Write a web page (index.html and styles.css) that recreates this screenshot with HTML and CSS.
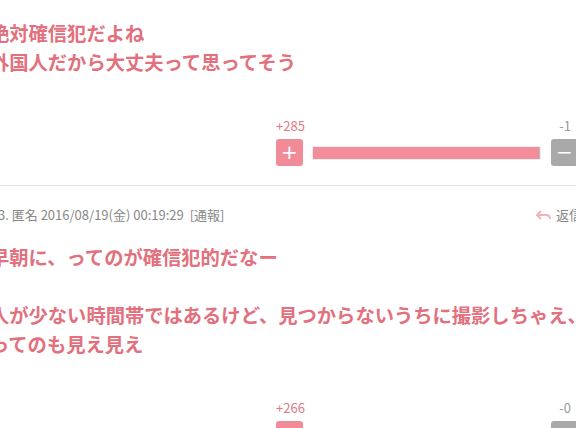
FILE: index.html
```html
<!DOCTYPE html>
<html lang="ja">
<head>
    <meta charset="UTF-8">
    <meta name="viewport" content="width=device-width, initial-scale=1.0">
    <title>コメント</title>
    <link rel="stylesheet" href="styles.css">
</head>
<body>
    <div class="thread">
        <div class="comment first">
            <div class="comment-body">絶対確信犯だよね<br>外国人だから大丈夫って思ってそう</div>
            <div class="vote">
                <div class="vote-counts">
                    <span class="plus-count">+285</span>
                    <span class="minus-count">-1</span>
                </div>
                <div class="vote-row">
                    <button class="vote-btn plus">+</button>
                    <div class="vote-bar"><div class="vote-fill" style="width: 99.6%"></div></div>
                    <button class="vote-btn minus">&minus;</button>
                </div>
            </div>
        </div>
        <div class="comment">
            <div class="comment-meta">
                <span class="meta-info">3. 匿名 2016/08/19(金) 00:19:29 <span class="report">[通報]</span></span>
                <span class="reply">
                    <svg width="15" height="11" viewBox="0 0 15 11">
                        <path d="M5 1 L1 5 L5 9 M1 5 H10 Q14 5 14 9" fill="none" stroke="#f2b3bb" stroke-width="2"/>
                    </svg>
                    返信
                </span>
            </div>
            <div class="comment-body">早朝に、ってのが確信犯的だなー<br><br>人が少ない時間帯ではあるけど、見つからないうちに撮影しちゃえ、<br>ってのも見え見え</div>
            <div class="vote">
                <div class="vote-counts">
                    <span class="plus-count">+266</span>
                    <span class="minus-count">-0</span>
                </div>
                <div class="vote-row">
                    <button class="vote-btn plus">+</button>
                    <div class="vote-bar"><div class="vote-fill" style="width: 100%"></div></div>
                    <button class="vote-btn minus">&minus;</button>
                </div>
            </div>
        </div>
    </div>
</body>
</html>
```

FILE: styles.css
```css
body {
    margin: 0;
    background-color: #fff;
    font-family: "Noto Sans CJK JP", "Liberation Sans", sans-serif;
    overflow: hidden;
}
.thread {
    width: 620px;
    margin-left: -10px;
}
.comment {
    padding: 21px 0 19px;
    border-bottom: 1px solid #e4e4e4;
}
.comment.first {
    padding-top: 19px;
}
.comment-body {
    font-size: 19.3px;
    line-height: 29px;
    font-weight: bold;
    color: #e2707d;
}
.comment-meta {
    display: flex;
    justify-content: space-between;
    align-items: center;
    font-size: 13px;
    line-height: 16px;
    color: #888;
    margin-bottom: 20px;
    padding-left: 8px;
}
.report {
    margin-left: 3px;
}
.reply {
    display: flex;
    align-items: center;
    gap: 5px;
    width: 74px;
    font-size: 13px;
}
.vote {
    margin-top: 41px;
    margin-left: 286px;
    width: 312px;
}
.vote-counts {
    display: flex;
    justify-content: space-between;
    font-size: 13px;
    line-height: 15px;
    padding-right: 17px;
    margin-bottom: 6px;
}
.plus-count {
    color: #e07a86;
}
.minus-count {
    color: #999;
}
.vote-row {
    display: flex;
    align-items: center;
}
.vote-btn {
    width: 27px;
    height: 27px;
    border: none;
    border-radius: 3px;
    padding: 0;
    color: #fff;
    font-size: 20px;
    line-height: 27px;
    font-family: "DejaVu Sans", sans-serif;
}
.plus {
    background-color: #f28b98;
}
.minus {
    background-color: #a9a9a9;
    margin-left: 10px;
}
.vote-bar {
    width: 229px;
    height: 14px;
    margin-left: 9px;
    background-color: #bbb;
    border: 1px solid #eee;
    box-sizing: border-box;
}
.vote-fill {
    height: 100%;
    background-color: #f38d9a;
}
```
